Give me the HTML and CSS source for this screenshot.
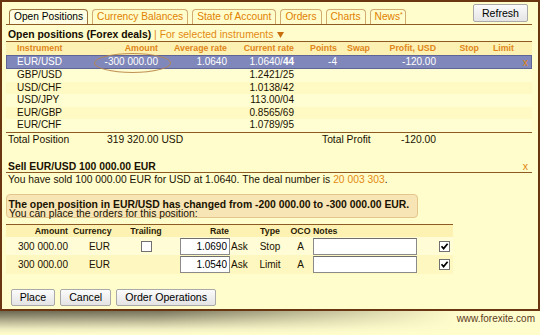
FILE: index.html
```html
<!DOCTYPE html>
<html>
<head>
<meta charset="utf-8">
<title>Open Positions</title>
<link rel="stylesheet" href="styles.css">
</head>
<body>
<div class="panel">
  <div class="tabbar">
    <div class="tab active">Open Positions</div>
    <div class="tab">Currency Balances</div>
    <div class="tab">State of Account</div>
    <div class="tab">Orders</div>
    <div class="tab">Charts</div>
    <div class="tab news">News<sup>*</sup></div>
    <button class="btn refresh">Refresh</button>
  </div>
  <div class="content">
    <div class="title"><b>Open positions (Forex deals)</b> <span class="link">| For selected instruments <svg class="tri" width="7" height="6" viewBox="0 0 7 6"><polygon points="0,0 7,0 3.5,6" fill="#c8700e"/></svg></span></div>
    <div class="ptable">
      <div class="prow phead"><span>Instrument</span><span>Amount</span><span>Average rate</span><span>Current rate</span><span>Points</span><span>Swap</span><span>Profit, USD</span><span>Stop</span><span>Limit</span><span></span></div>
      <div class="prow sel"><span>EUR/USD</span><span>-300 000.00</span><span>1.0640</span><span>1.0640/<b>44</b></span><span>-4</span><span></span><span>-120.00</span><span></span><span></span><span class="xmark">x</span></div>
      <div class="prow"><span>GBP/USD</span><span></span><span></span><span>1.2421/25</span><span></span><span></span><span></span><span></span><span></span><span></span></div>
      <div class="prow alt"><span>USD/CHF</span><span></span><span></span><span>1.0138/42</span><span></span><span></span><span></span><span></span><span></span><span></span></div>
      <div class="prow"><span>USD/JPY</span><span></span><span></span><span>113.00/04</span><span></span><span></span><span></span><span></span><span></span><span></span></div>
      <div class="prow alt"><span>EUR/GBP</span><span></span><span></span><span>0.8565/69</span><span></span><span></span><span></span><span></span><span></span><span></span></div>
      <div class="prow"><span>EUR/CHF</span><span></span><span></span><span>1.0789/95</span><span></span><span></span><span></span><span></span><span></span><span></span></div>
      <div class="oval"></div>
    </div>
    <div class="totals"><span>Total Position</span><span>319 320.00 USD</span><span>Total Profit</span><span class="r">-120.00</span></div>

    <div class="sellhead"><span>Sell EUR/USD 100 000.00 EUR</span><span class="xmark">x</span></div>
    <div class="sold">You have sold 100 000.00 EUR for USD at 1.0640. The deal number is <span class="link">20 003 303</span>.</div>
    <div class="notice">The open position in EUR/USD has changed from -200 000.00 to -300 000.00 EUR.</div>
    <div class="hint">You can place the orders for this position:</div>

    <div class="otable">
      <div class="orow ohead"><span class="c-amt">Amount</span><span class="c-curh">Currency</span><span class="c-trl">Trailing</span><span class="c-rate">Rate</span><span></span><span class="c-type">Type</span><span class="c-oco">OCO</span><span class="c-notes">Notes</span><span></span></div>
      <div class="orow r1"><span class="c-amt">300 000.00</span><span class="c-cur">EUR</span><span class="c-trl"><span class="cb"></span></span><span class="c-rate"><input class="inp rate" type="text" value="1.0690"></span><span class="c-ask">Ask</span><span class="c-type">Stop</span><span class="c-oco">A</span><span class="c-notes"><input class="inp notes" type="text" value=""></span><span class="c-chk"><span class="cb"><svg width="9" height="9" viewBox="0 0 9 9"><path d="M1.5 4.2 L3.6 6.6 L7.6 1.8" fill="none" stroke="#000" stroke-width="1.7"/></svg></span></span></div>
      <div class="orow r2"><span class="c-amt">300 000.00</span><span class="c-cur">EUR</span><span class="c-trl"></span><span class="c-rate"><input class="inp rate" type="text" value="1.0540"></span><span class="c-ask">Ask</span><span class="c-type">Limit</span><span class="c-oco">A</span><span class="c-notes"><input class="inp notes" type="text" value=""></span><span class="c-chk"><span class="cb"><svg width="9" height="9" viewBox="0 0 9 9"><path d="M1.5 4.2 L3.6 6.6 L7.6 1.8" fill="none" stroke="#000" stroke-width="1.7"/></svg></span></span></div>
    </div>

    <div class="actions">
      <button class="btn">Place</button>
      <button class="btn">Cancel</button>
      <button class="btn">Order Operations</button>
    </div>
  </div>
</div>
<div class="footer">www.forexite.com</div>
</body>
</html>
```

FILE: styles.css
```css
* { box-sizing: border-box; }
html, body { margin: 0; padding: 0; }
body {
  width: 540px;
  height: 335px;
  overflow: hidden;
  background: #fffdcc;
  font-family: "Liberation Sans", Arial, sans-serif;
  font-size: 10.3px;
  color: #1a1200;
}
.panel {
  height: 311px;
  border: 2px solid #6a3511;
  background: #fffdcc;
}
.tabbar {
  display: flex;
  align-items: flex-end;
  height: 23px;
  margin: 0 6px 0 4px;
  padding-left: 3px;
  border-bottom: 1px solid #8c5a22;
}
.tab {
  height: 15px;
  line-height: 14px;
  padding: 0 4px;
  margin-right: 4px;
  border: 1px solid #d2ab70;
  border-bottom: 0;
  border-radius: 4px 4px 0 0;
  color: #e07f00;
  font-size: 10.2px;
  white-space: nowrap;
}
.tab.news { padding-right: 2px; }
.tab.active {
  color: #000;
  border-color: #9b7440;
  background: #fffee2;
}
.tab sup { font-size: 7px; vertical-align: top; line-height: 9px; }
.btn {
  font-family: "Liberation Sans", Arial, sans-serif;
  font-size: 10.6px;
  color: #000;
  height: 17px;
  line-height: 15px;
  padding: 0 8px;
  border: 1px solid #a9a9a9;
  border-radius: 2px;
  background: linear-gradient(#fbfbfb, #e4e4e4);
}
.refresh {
  margin-left: auto;
  align-self: flex-start;
  margin-top: 2px;
  margin-right: 4px;
  height: 18px;
}
.content { margin: 0 6px 0 4px; }
.title {
  margin-top: 4px;
  height: 13px;
  line-height: 12px;
  padding-left: 2px;
  font-size: 10.4px;
  border-bottom: 1px solid #8c5a22;
  white-space: nowrap;
}
.title b { color: #140c00; }
.link { color: #e38a12; }
.tri { vertical-align: 0px; margin-left: 1px; }

.ptable {
  position: relative;
  font-size: 10px;
  border-bottom: 1px solid #8c5a22;
}
.prow {
  display: grid;
  grid-template-columns: 94px 58px 69px 67px 43px 33px 66px 43px 35px 1fr;
  height: 12.6px;
  line-height: 12.6px;
  background: #fffdd2;
}
.prow > span { text-align: right; white-space: nowrap; }
.prow > span:first-child { text-align: left; padding-left: 11px; }
.prow > span:last-child { padding-right: 4px; }
.prow.alt { background: #fff9c4; }
.phead {
  height: 13px;
  line-height: 13px;
  background: #fcf1b2;
  color: #e0861a;
  font-weight: bold;
  font-size: 8.8px;
}
.prow.sel {
  height: 14px;
  line-height: 12px;
  background: #8087ba;
  color: #fff;
  border-top: 1px solid #5e6596;
  border-bottom: 1px solid #5e6596;
  box-shadow: inset 1px 0 #5e6596, inset -1px 0 #5e6596;
}
.sel .xmark { color: #e08410; }
.oval {
  position: absolute;
  left: 88px;
  top: 10.5px;
  width: 77px;
  height: 20px;
  border: 1px solid rgba(186, 134, 72, 0.9);
  border-radius: 50%;
}
.totals {
  display: grid;
  grid-template-columns: 101px 215px 48px 66px;
  height: 14px;
  line-height: 14px;
  white-space: nowrap;
}
.totals > span:first-child { padding-left: 2px; }
.totals .r { text-align: right; }

.sellhead {
  margin-top: 14px;
  display: flex;
  justify-content: space-between;
  height: 12px;
  line-height: 11px;
  padding: 0 4px 0 2px;
  font-weight: bold;
  font-size: 10.4px;
  border-bottom: 1px solid #8c5a22;
}
.xmark { color: #e08410; font-weight: normal; font-size: 10.5px; }
.sold { line-height: 13px; padding-left: 2px; white-space: nowrap; }
.notice {
  margin-top: 8px;
  width: 412px;
  height: 24px;
  padding: 3px 0 0 1.5px;
  border: 1px solid #e2c68c;
  border-radius: 4px;
  background: #f7e5b5;
  font-weight: bold;
  font-size: 10.4px;
  line-height: 13px;
  white-space: nowrap;
}
.hint {
  margin-top: -9.5px;
  line-height: 12px;
  padding-left: 3px;
}

.otable {
  margin-top: 3.5px;
  width: 447px;
  font-size: 10px;
}
.orow {
  display: grid;
  grid-template-columns: 64px 54px 44px 62px 22px 36px 25px 107px 33px;
  height: 18.4px;
  align-items: center;
  white-space: nowrap;
}
.ohead {
  height: 13px;
  line-height: 12px;
  border-top: 1px solid #8c5a22;
  background: #fdf2b1;
  font-weight: bold;
  font-size: 8.8px;
  color: #2a1c06;
}
.orow.r1 { background: #fffcd6; }
.orow.r2 { background: #fff7c0; }
.c-amt { text-align: right; padding-right: 2px; }
.c-curh { padding-left: 3px; }
.c-cur { text-align: center; padding-left: 5px; }
.c-trl { display: flex; justify-content: center; }
.c-rate { display: flex; justify-content: flex-end; }
.ohead .c-rate { padding-right: 1px; }
.c-ask { padding-left: 1px; }
.c-type { text-align: center; }
.c-oco { text-align: center; }
.c-notes { display: flex; }
.c-chk { display: flex; justify-content: flex-end; padding-right: 3px; }
.inp {
  height: 17px;
  border: 1px solid #8a8a8a;
  border-top-color: #6e6e6e;
  background: #fff;
  font-family: "Liberation Sans", Arial, sans-serif;
  font-size: 10px;
  color: #000;
  padding: 0 2px;
  margin: 0;
  outline: none;
}
.inp.rate { width: 50px; text-align: right; }
.inp.notes { width: 103.5px; }
.cb {
  display: flex;
  align-items: center;
  justify-content: center;
  width: 11px;
  height: 11px;
  border: 1px solid #707070;
  background: #fff;
}

.actions {
  display: flex;
  gap: 5px;
  margin-top: 15.2px;
  padding-left: 4.7px;
}

.footer {
  height: 24px;
  line-height: 16px;
  padding-right: 5px;
  text-align: right;
  font-size: 10px;
  color: #5b3a1c;
  background:
    linear-gradient(to right, rgba(255, 253, 204, 0) 0%, rgba(255, 253, 204, 0.1) 30%, #fffdcc 85%),
    linear-gradient(to bottom, #6c6852 0px, #8e8a70 5px, #c4c09c 12px, #eeebc0 18px, #fffdcc 23px);
}
```
